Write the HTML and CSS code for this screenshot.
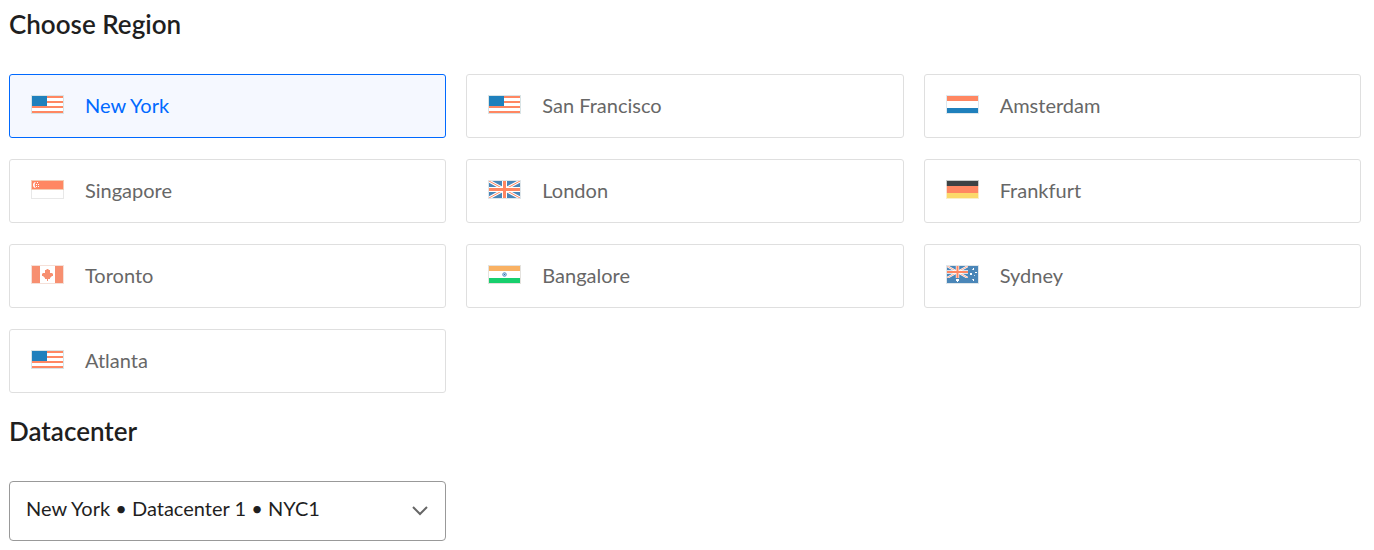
FILE: index.html
```
<!DOCTYPE html>
<html lang="en">
	<head>
		<meta charset="UTF-8" />
		<meta name="viewport" content="width=device-width, initial-scale=1" />
		<title>Choose Region</title>
		<link rel="stylesheet" href="styles.css">
	</head>
	<body>
		<svg class="sprite" aria-hidden="true">
			<symbol id="flag-us" viewBox="0 0 33 19">
				<path fill="#d9e4e6" d="M0 0h33v19H0z" />
				<path fill="#fff" d="M1 1h31v17H1z" />
				<path fill="#ff8762" d="M1 1h31v2H1zM1 6h31v2H1zM1 11h31v2H1zM1 16h31v2H1z" />
				<path fill="#1f80bc" d="M1 1h15v10H1z" />
			</symbol>
			<symbol id="union-jack" viewBox="0 0 31 17" preserveAspectRatio="none">
				<path fill="#4a86b8" d="M0 0h31v17H0z" />
				<path stroke="#fff" stroke-width="3" d="M0 0l31 17M31 0L0 17" />
				<path stroke="#ff8762" stroke-width="1" d="M0 0l31 17M31 0L0 17" />
				<path fill="#fff" d="M13 0h5v17h-5zM0 6h31v5H0z" />
				<path fill="#ff8762" d="M14 0h3v17h-3zM0 7h31v3H0z" />
			</symbol>
		</svg>

		<form>
			<fieldset class="section">
				<legend class="section-title">Choose Region</legend>

				<div class="region-grid">
					<label class="region">
						<input class="region-input" type="radio" name="region" value="nyc" checked />
						<svg class="flag" viewBox="0 0 33 19" aria-hidden="true"><use href="#flag-us" /></svg>
						<span>New York</span>
					</label>

					<label class="region">
						<input class="region-input" type="radio" name="region" value="sfo" />
						<svg class="flag" viewBox="0 0 33 19" aria-hidden="true"><use href="#flag-us" /></svg>
						<span>San Francisco</span>
					</label>

					<label class="region">
						<input class="region-input" type="radio" name="region" value="ams" />
						<svg class="flag" viewBox="0 0 33 19" aria-hidden="true">
							<path fill="#dfe8ee" d="M0 0h33v19H0z" />
							<path fill="#fff" d="M1 1h31v17H1z" />
							<path fill="#ff8762" d="M1 1h31v5H1z" />
							<path fill="#1f80bc" d="M1 13h31v5H1z" />
						</svg>
						<span>Amsterdam</span>
					</label>

					<label class="region">
						<input class="region-input" type="radio" name="region" value="sgp" />
						<svg class="flag" viewBox="0 0 33 19" aria-hidden="true">
							<path fill="#e8e8e8" d="M0 0h33v19H0z" />
							<path fill="#fff" d="M1 1h31v17H1z" />
							<path fill="#f3cdb4" d="M0 0h33v10H0z" />
							<path fill="#ff8762" d="M1 1h31v8H1z" />
							<path fill="#fff" d="M5 2a3 3 0 0 0 0 6 4 4 0 0 1 0-6z" />
							<path fill="#fff" d="M6 2h1v1H6zM5 4h1v1H5zM7 4h1v1H7zM5 6h1v1H5zM7 6h1v1H7z" />
						</svg>
						<span>Singapore</span>
					</label>

					<label class="region">
						<input class="region-input" type="radio" name="region" value="lon" />
						<svg class="flag" viewBox="0 0 33 19" aria-hidden="true">
							<path fill="#dfe6ea" d="M0 0h33v19H0z" />
							<use href="#union-jack" x="1" y="1" width="31" height="17" />
						</svg>
						<span>London</span>
					</label>

					<label class="region">
						<input class="region-input" type="radio" name="region" value="fra" />
						<svg class="flag" viewBox="0 0 33 19" aria-hidden="true">
							<path fill="#c9cccb" d="M0 0h33v6H0z" />
							<path fill="#f6dfd2" d="M0 6h33v7H0z" />
							<path fill="#faefc8" d="M0 13h33v6H0z" />
							<path fill="#3d4244" d="M1 1h31v5H1z" />
							<path fill="#ff8762" d="M1 6h31v7H1z" />
							<path fill="#fbd96a" d="M1 13h31v5H1z" />
						</svg>
						<span>Frankfurt</span>
					</label>

					<label class="region">
						<input class="region-input" type="radio" name="region" value="tor" />
						<svg class="flag" viewBox="0 0 33 19" aria-hidden="true">
							<path fill="#f5e0d8" d="M0 0h33v19H0z" />
							<path fill="#f78f70" d="M1 1h31v17H1z" />
							<path fill="#fff" d="M9 1h15v17H9z" />
							<path fill="#f78f70" d="M16 4h1l1 1h1v3h2l1 1v2h-1l-2 2v1h-2v2h-1v-2h-2v-1l-2-2h-1V9l1-1h2V5h1z" />
						</svg>
						<span>Toronto</span>
					</label>

					<label class="region">
						<input class="region-input" type="radio" name="region" value="blr" />
						<svg class="flag" viewBox="0 0 33 19" aria-hidden="true">
							<path fill="#e4e2de" d="M0 0h33v19H0z" />
							<path fill="#fff" d="M1 1h31v17H1z" />
							<path fill="#f9b163" d="M1 1h31v5H1z" />
							<path fill="#18cf6d" d="M1 13h31v5H1z" />
							<circle cx="16.500" cy="9.500" r="1.800" fill="#b9d4ea" stroke="#5b93c4" />
							<path fill="#2f6da5" d="M16 9h1v1h-1z" />
						</svg>
						<span>Bangalore</span>
					</label>

					<label class="region">
						<input class="region-input" type="radio" name="region" value="syd" />
						<svg class="flag" viewBox="0 0 33 19" aria-hidden="true">
							<path fill="#dfe6ea" d="M0 0h33v19H0z" />
							<path fill="#4a86b8" d="M1 1h31v17H1z" />
							<use href="#union-jack" x="1" y="1" width="21" height="12" />
							<path fill="#fff" d="M10 14h3v2h-1v1h-1v-1h-1zM27 3h1v2h-1zM24 8h2v2h-2zM29 7h2v1h-2zM27 14h1v2h-1z" />
							<path fill="#c6dbea" d="M26 4h1v1h-1zM26 14h1v1h-1zM28 10h1v1h-1z" />
						</svg>
						<span>Sydney</span>
					</label>

					<label class="region">
						<input class="region-input" type="radio" name="region" value="atl" />
						<svg class="flag" viewBox="0 0 33 19" aria-hidden="true"><use href="#flag-us" /></svg>
						<span>Atlanta</span>
					</label>
				</div>
			</fieldset>

			<div class="section">
				<label class="section-title" for="datacenter">Datacenter</label>

				<div class="region-grid">
					<div class="select">
						<select class="select-input" id="datacenter" name="datacenter">
							<option>New York • Datacenter 1 • NYC1</option>
						</select>
						<svg class="select-arrow" viewBox="0 0 16 10" aria-hidden="true">
							<path d="M1 1l7 7 7-7" />
						</svg>
					</div>
				</div>
			</div>
		</form>
	</body>
</html>
```

FILE: styles.css
```
* {
	box-sizing: border-box;
}

body {
	margin: 0;
	padding: 8px 13px 8px 9px;
	background-color: #fff;
	color: #1f1f1f;
	font-family: Lato, sans-serif;
	font-size: 20px;
	line-height: 24px;
}

.sprite {
	display: none;
}

.section {
	min-width: 0;
	margin: 0 0 22px;
	padding: 0;
	border: 0;
}

.section-title {
	display: block;
	margin-bottom: 34px;
	padding: 0;
	font-size: 26px;
	font-weight: 600;
	line-height: 32px;
}

.region-grid {
	display: grid;
	grid-template-columns: repeat(3, 1fr);
	gap: 21px 20px;
}

.region {
	display: flex;
	align-items: center;
	min-height: 64px;
	padding: 0 21px 3px;
	border: 1px solid #dfdfdf;
	border-radius: 3px;
	color: #676767;
	cursor: pointer;
}

.region:has(:checked) {
	border-color: #0069ff;
	background-color: #f5f8ff;
	color: #0069ff;
}

.region:focus-within:has(:focus-visible) {
	outline: 2px solid #0069ff;
}

.region-input {
	appearance: none;
	width: 0;
	height: 0;
	margin: 0;
}

.flag {
	flex: none;
	width: 33px;
	height: 19px;
	margin-right: 21px;
}

.select {
	display: grid;
	align-items: center;
}

.select-input,
.select-arrow {
	grid-area: 1 / 1;
}

.select-input {
	appearance: none;
	width: 100%;
	height: 60px;
	padding: 0 48px 6px 16px;
	border: 1px solid #999;
	border-radius: 4px;
	background-color: #fff;
	color: #1f1f1f;
	font: inherit;
}

.select-arrow {
	justify-self: end;
	width: 16px;
	height: 10px;
	margin-right: 18px;
	fill: none;
	stroke: #666;
	stroke-width: 2;
	pointer-events: none;
}
```
